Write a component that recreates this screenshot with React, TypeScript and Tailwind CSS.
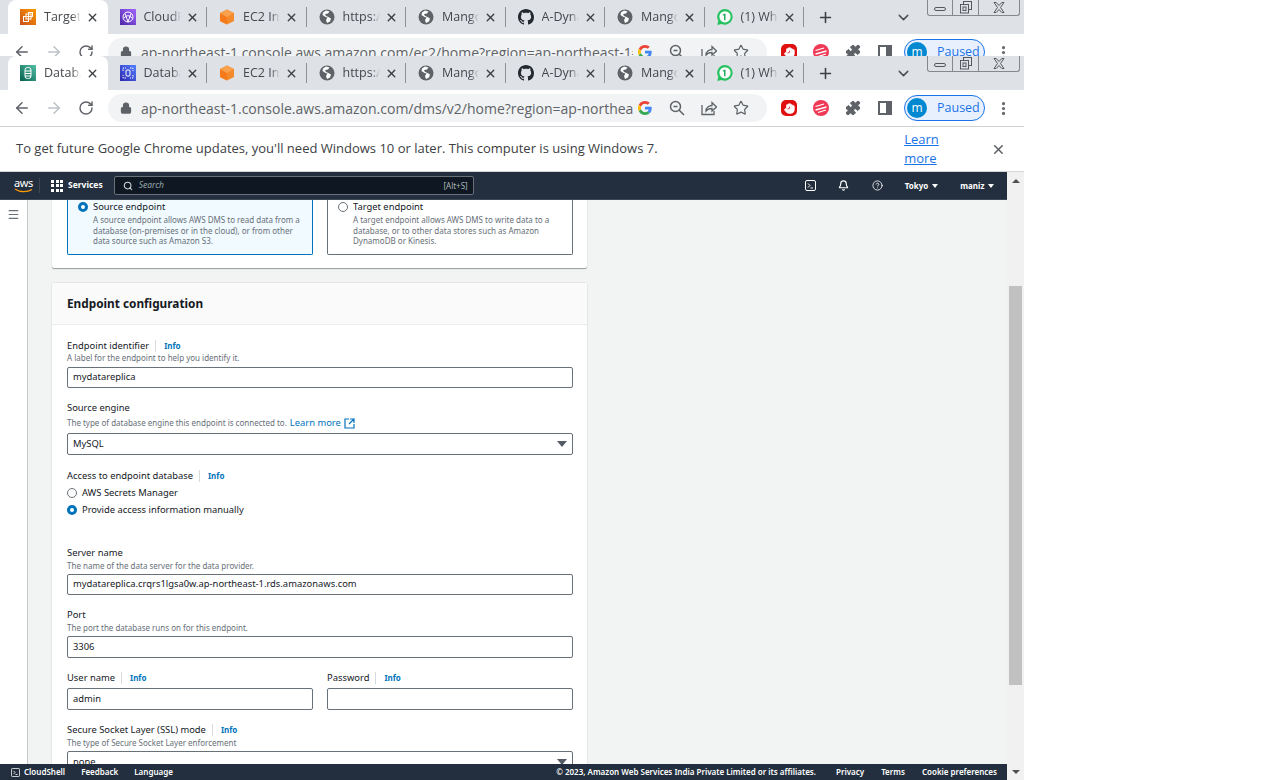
import React from "react";
import { ArrowLeft, ArrowRight, RotateCw, Lock, X, Plus, ChevronDown, Star, Search, Hand, Puzzle, MoreVertical, Menu, Bell, CircleHelp, Globe } from "lucide-react";

const Square = ({ from, to, children }: { from: string; to: string; children?: React.ReactNode }) => (
  <svg width="16" height="16" viewBox="0 0 16 16" className="shrink-0">
    <defs>
      <linearGradient id={from.slice(1) + "g"} x1="0" y1="1" x2="1" y2="0">
        <stop offset="0" stopColor={from} />
        <stop offset="1" stopColor={to} />
      </linearGradient>
    </defs>
    <rect width="16" height="16" fill={`url(#${from.slice(1)}g)`} />
    {children}
  </svg>
);

const Ec2Icon = () => (
  <Square from="#c8511b" to="#ff9900">
    <g fill="none" stroke="#fff" strokeWidth="1">
      <rect x="3.5" y="7.5" width="5" height="5" />
      <rect x="6" y="5" width="5" height="5" />
      <rect x="8.5" y="3.5" width="4" height="4" />
    </g>
  </Square>
);
const CloudFrontIcon = () => (
  <Square from="#4d27a8" to="#a166ff">
    <g fill="none" stroke="#fff" strokeWidth="1">
      <circle cx="8" cy="8" r="5" />
      <path d="M5 4.5 8 13M11 4.5 8 13M4 9c3-3 5-3 8 0" />
    </g>
  </Square>
);
const RdsIcon = () => (
  <Square from="#055f4e" to="#56c0a7">
    <g fill="none" stroke="#fff" strokeWidth="1">
      <rect x="5" y="2.5" width="6" height="11" rx="2.5" />
      <path d="M5 6h6M5 8.5h6M5 11h6" />
    </g>
  </Square>
);
const DmsIcon = () => (
  <Square from="#2e27ad" to="#527fff">
    <g fill="none" stroke="#fff" strokeWidth="1">
      <rect x="6" y="5" width="4" height="6" rx="1" />
      <path d="M3 6V3h3M10 3h3v3M13 10v3h-3M6 13H3v-3" strokeDasharray="1.5 1" />
    </g>
  </Square>
);
const BoxIcon = () => (
  <svg width="16" height="16" viewBox="0 0 16 16" className="shrink-0">
    <path d="M8 0.5 15 4v8l-7 3.5L1 12V4z" fill="#f58a2b" />
    <path d="M8 8v7.5L1 12V4z" fill="#f47a1c" />
    <path d="M8 0.5 15 4 8 8 1 4z" fill="#f9a04d" />
  </svg>
);
const GlobeFav = () => (
  <svg width="16" height="16" viewBox="0 0 16 16" className="shrink-0">
    <circle cx="8" cy="8" r="7.5" fill="#5f6368" />
    <path d="M7 1.5 4 3.5 3.5 6l3 2 2 .5L7 11l1 3 3-1.5 1-3-2.500-1.500L7 7 6 5l3-.5 1.500-2z" fill="#fff" />
  </svg>
);
const GithubFav = () => (
  <svg width="16" height="16" viewBox="0 0 16 16" className="shrink-0" fill="#24292f">
    <path d="M8 0C3.58 0 0 3.58 0 8c0 3.54 2.29 6.53 5.47 7.59.4.07.55-.17.55-.38 0-.19-.01-.82-.01-1.49-2.010.37-2.530-.49-2.690-.94-.09-.23-.48-.94-.82-1.130-.28-.15-.68-.52-.01-.53.63-.01 1.080.58 1.230.82.72 1.210 1.870.87 2.330.66.07-.52.28-.87.51-1.070-1.780-.2-3.640-.89-3.640-3.950 0-.87.31-1.590.82-2.150-.08-.2-.36-1.020.08-2.120 0 0 .67-.21 2.200.82.64-.18 1.320-.27 2-.27s1.360.09 2 .27c1.530-1.040 2.200-.82 2.200-.82.44 1.100.16 1.920.08 2.120.51.56.82 1.270.82 2.150 0 3.070-1.870 3.750-3.650 3.950.29.25.54.73.54 1.480 0 1.070-.01 1.930-.01 2.200 0 .21.15.46.55.38A8.010 8.010 0 0 0 16 8c0-4.420-3.580-8-8-8z" />
  </svg>
);
const WhatsappFav = () => (
  <svg width="16" height="16" viewBox="0 0 16 16" className="shrink-0">
    <path d="M8 0a7.800 7.800 0 0 0-6.700 11.800L.3 16l4.300-1.100A7.800 7.800 0 1 0 8 0z" fill="#25c25f" />
    <circle cx="8" cy="7.800" r="5.600" fill="#fff" />
    <path d="M8.500 4.500v6.800H7.100V6.200l-1.300.4V5.500l2.500-1z" fill="#12a84d" />
  </svg>
);

const GoogleG = () => (
  <svg width="14" height="14" viewBox="0 0 48 48">
    <path fill="#EA4335" d="M24 9.500c3.500 0 6.700 1.200 9.200 3.600l6.900-6.900C35.900 2.400 30.500 0 24 0 14.600 0 6.500 5.400 2.600 13.200l8 6.200C12.400 13.700 17.700 9.500 24 9.500z" />
    <path fill="#4285F4" d="M46.900 24.500c0-1.600-.1-3.100-.4-4.500H24v9h12.900c-.6 3-2.200 5.500-4.800 7.200l7.700 6c4.500-4.200 7.100-10.300 7.100-17.700z" />
    <path fill="#FBBC05" d="M10.500 28.600c-.5-1.400-.8-3-.8-4.600s.3-3.200.8-4.600l-8-6.200C.9 16.500 0 20.100 0 24s.9 7.500 2.600 10.800l7.900-6.200z" />
    <path fill="#34A853" d="M24 48c6.500 0 11.900-2.100 15.900-5.800l-7.700-6c-2.200 1.500-4.900 2.300-8.100 2.300-6.300 0-11.600-4.200-13.500-9.900l-8 6.200C6.500 42.600 14.600 48 24 48z" />
  </svg>
);

type TabInfo = { icon: React.ReactNode; label: string };

const Tab = ({ tab, active, last }: { tab: TabInfo; active?: boolean; last?: boolean }) => (
  <div
    className={`relative flex h-[34px] w-[99.500px] shrink-0 items-center pl-[12px] pr-[8px] ${
      active ? "rounded-t-[8px] bg-white" : ""
    }`}
  >
    {tab.icon}
    <span className="ml-[8px] w-[37px] overflow-hidden whitespace-nowrap text-[12.500px] text-[#45494e] [mask-image:linear-gradient(to_right,black_75%,transparent)]">
      {tab.label}
    </span>
    <X size={13} strokeWidth={2.5} className="ml-[5px] shrink-0 text-[#3c4043]" />
    {!active && <span className={`absolute right-0 top-[7px] h-[20px] w-px bg-[#8e9195] ${last ? "" : ""}`} />}
  </div>
);

const WindowControls = () => (
  <div className="absolute right-[4px] top-0 flex h-[16px] w-[93px] rounded-b-[3px] border border-t-0 border-[#84888d]">
    <div className="flex w-[25px] items-center justify-center border-r border-[#84888d]">
      <span className="mt-[3px] h-[4px] w-[12px] rounded-[2px] border border-[#55595e]" />
    </div>
    <div className="flex w-[26px] items-center justify-center border-r border-[#84888d]">
      <svg width="12" height="13" viewBox="0 0 12 13" fill="none" stroke="#55595e">
        <rect x="3.500" y="0.500" width="8" height="8" />
        <rect x="0.500" y="3.500" width="8" height="8.500" fill="#dee1e6" />
        <rect x="3" y="6" width="3" height="3.500" />
      </svg>
    </div>
    <div className="flex flex-1 items-center justify-center">
      <svg width="12" height="11" viewBox="0 0 12 11" fill="none" stroke="#55595e">
        <path d="M1 .5h2.200L6 3.500 8.800.5H11L7.500 5.500 11 10.500H8.800L6 7.500 3.200 10.500H1L4.500 5.500z" />
      </svg>
    </div>
  </div>
);

const TabStrip = ({ tabs }: { tabs: TabInfo[] }) => (
  <div className="relative flex h-[34px] items-center bg-[#dee1e6] pl-[8px]">
    {tabs.map((t, i) => (
      <Tab key={i} tab={t} active={i === 0} last={i === tabs.length - 1} />
    ))}
    <Plus size={17} strokeWidth={2.2} className="ml-[13px] shrink-0 text-[#3c4043]" />
    <ChevronDown size={17} strokeWidth={2} className="ml-[61px] shrink-0 text-[#4a4d51]" />
    <WindowControls />
  </div>
);

const Toolbar = ({ url }: { url: string }) => (
  <div className="flex h-[36px] shrink-0 items-center bg-white">
    <ArrowLeft size={18} strokeWidth={2} className="ml-[13px] text-[#5f6368]" />
    <ArrowRight size={18} strokeWidth={2} className="ml-[14px] text-[#bdc1c6]" />
    <RotateCw size={16} strokeWidth={2.2} className="ml-[15px] text-[#5f6368]" />
    <div className="ml-[14px] flex h-[28px] w-[659px] items-center rounded-full bg-[#f1f3f4]">
      <Lock size={12} strokeWidth={2.5} fill="#5f6368" className="ml-[12px] shrink-0 text-[#5f6368]" />
      <span className="ml-[9px] w-[492px] overflow-hidden whitespace-nowrap font-['Open_Sans',sans-serif] text-[14px] text-[#5f6368]">{url}</span>
      <span className="ml-[5px] flex w-[14px] shrink-0"><GoogleG /></span>
      <svg width="16" height="16" viewBox="0 0 16 16" fill="none" stroke="#5f6368" strokeWidth="1.500" className="ml-[17px] shrink-0">
        <circle cx="6.500" cy="6.500" r="5" /><path d="M4.500 6.500h4M10 10l5 5" />
      </svg>
      <svg width="16" height="16" viewBox="0 0 16 16" fill="none" stroke="#5f6368" strokeWidth="1.300" className="ml-[16px] shrink-0">
        <path d="M1 5v9.500h12V11M5 11c0-3.500 3-5.500 6-5.500V2.500L15.500 7 11 11V8.500C8.500 8.500 6.500 9 5 11z" />
      </svg>
      <Star size={16} strokeWidth={1.800} className="ml-[16px] shrink-0 text-[#5f6368]" />
    </div>
    <div className="ml-[14px] flex h-[16px] w-[16px] items-center justify-center rounded-[5px] bg-[#e01010]">
      <Hand size={11} strokeWidth={2.500} fill="#fff" className="text-white" />
    </div>
    <svg width="16" height="16" viewBox="0 0 16 16" className="ml-[16px] shrink-0">
      <circle cx="8" cy="8" r="8" fill="#ee3a56" />
      <path d="M2.500 6.500 11 4M2.500 10 13.500 7M5 12.500l8-2.500" stroke="#fff" strokeWidth="1.300" fill="none" />
    </svg>
    <Puzzle size={16} fill="#5f6368" strokeWidth={1.500} className="ml-[16px] shrink-0 text-[#5f6368]" />
    <svg width="16" height="16" viewBox="0 0 16 16" className="ml-[16px] shrink-0" fill="none">
      <rect x="2" y="2" width="12" height="12" stroke="#5f6368" strokeWidth="2" />
      <rect x="9" y="2" width="5" height="12" fill="#5f6368" />
    </svg>
    <div className="ml-[11px] flex h-[26px] w-[81px] shrink-0 items-center rounded-full border border-[#1a73e8] bg-[#e8f0fe]">
      <span className="ml-[2px] flex h-[20px] w-[20px] items-center justify-center rounded-full bg-[#0288d1] font-['Open_Sans',sans-serif] text-[12px] leading-none text-white">m</span>
      <span className="ml-[10px] font-['Open_Sans',sans-serif] text-[12.500px] text-[#1a73e8]">Paused</span>
    </div>
    <MoreVertical size={17} strokeWidth={2.500} className="ml-[10px] shrink-0 text-[#5f6368]" />
  </div>
);

const common: TabInfo[] = [
  { icon: <BoxIcon />, label: "EC2 Ins" },
  { icon: <GlobeFav />, label: "https://" },
  { icon: <GlobeFav />, label: "Mango" },
  { icon: <GithubFav />, label: "A-Dyna" },
  { icon: <GlobeFav />, label: "Mango" },
  { icon: <WhatsappFav />, label: "(1) Wh" },
];
const tabs1: TabInfo[] = [{ icon: <Ec2Icon />, label: "Target" }, { icon: <CloudFrontIcon />, label: "CloudF" }, ...common];
const tabs2: TabInfo[] = [{ icon: <RdsIcon />, label: "Databa" }, { icon: <DmsIcon />, label: "Databa" }, ...common];

const Info = () => (
  <>
    <span className="mx-[6px] h-[12px] w-px bg-[#d5dbdb]" />
    <span className="ml-[2px] text-[8px] font-bold text-[#0073bb]">Info</span>
  </>
);

const Label = ({ text, info, mt }: { text: string; info?: boolean; mt: string }) => (
  <div className={`flex h-[14px] items-center text-[9.400px] text-[#16191f] ${mt}`}>
    <span>{text}</span>
    {info && <Info />}
  </div>
);

const Desc = ({ children, mt }: { children: React.ReactNode; mt: string }) => (
  <div className={`flex h-[10px] items-center whitespace-nowrap text-[8px] text-[#687078] ${mt}`}>{children}</div>
);

const Input = ({ value, mt, h = "h-[22px]", select }: { value?: string; mt: string; h?: string; select?: boolean }) => (
  <div className={`flex items-center justify-between rounded-[2px] border border-[#687078] bg-white pl-[5px] pr-[5px] text-[9.400px] text-[#16191f] ${mt} ${h}`}>
    <span>{value}</span>
    {select && <span className="h-0 w-0 border-x-[5px] border-t-[6px] border-x-transparent border-t-[#545b64]" />}
  </div>
);

const Radio = ({ on }: { on?: boolean }) =>
  on ? (
    <span className="h-[10px] w-[10px] shrink-0 rounded-full border-[3px] border-[#0073bb] bg-white" />
  ) : (
    <span className="h-[10px] w-[10px] shrink-0 rounded-full border border-[#687078] bg-white" />
  );

const RadioRow = ({ text, on, mt }: { text: string; on?: boolean; mt: string }) => (
  <div className={`flex h-[14px] items-center gap-[5px] text-[9.400px] text-[#16191f] ${mt}`}>
    <Radio on={on} />
    <span>{text}</span>
  </div>
);

const Tile = ({ on, title, lines }: { on?: boolean; title: string; lines: string[] }) => (
  <div
    className={`h-[55px] w-[246px] rounded-b-[2px] border border-t-0 pl-[10px] pt-[1px] ${
      on ? "border-[#0073bb] bg-[#f1faff]" : "border-[#687078] bg-white"
    }`}
  >
    <div className="flex h-[12px] items-center gap-[5px] text-[9.400px] text-[#16191f]">
      <Radio on={on} />
      <span>{title}</span>
    </div>
    <div className="ml-[15px] mt-[2px] text-[8px] leading-[10.500px] text-[#687078]">
      {lines.map((l) => (
        <div key={l} className="whitespace-nowrap">{l}</div>
      ))}
    </div>
  </div>
);

const NavSep = () => <span className="h-[15px] w-px bg-[#414750]" />;

const Caret = () => <span className="ml-[4px] h-0 w-0 border-x-[3px] border-t-[4px] border-x-transparent border-t-white" />;

export default function App() {
  return (
    <div className="h-[780px] w-[1268px] overflow-hidden bg-white font-['Open_Sans',sans-serif]">
      <div className="flex h-[780px] w-[1024px] flex-col">
        <div className="h-[56px] shrink-0 overflow-hidden">
          <TabStrip tabs={tabs1} />
          <Toolbar url="ap-northeast-1.console.aws.amazon.com/ec2/home?region=ap-northeast-1#..." />
        </div>
        <TabStrip tabs={tabs2} />
        <Toolbar url="ap-northeast-1.console.aws.amazon.com/dms/v2/home?region=ap-northeast..." />
        <div className="h-px shrink-0 bg-[#d0d2d5]" />
        <div className="flex h-[44px] shrink-0 items-center bg-white pl-[16px] pr-[18px] text-[13px] text-[#3c4043]">
          <span className="w-[895px]">To get future Google Chrome updates, you'll need Windows 10 or later. This computer is using Windows 7.</span>
          <span className="text-[#1a73e8] underline">Learn more</span>
          <X size={15} strokeWidth={2.500} className="ml-[17px] text-[#5f6368]" />
        </div>
        <div className="h-px shrink-0 bg-[#d5d7da]" />
        <div className="flex min-h-0 flex-1">
          <div className="flex min-w-0 flex-1 flex-col font-['Noto_Sans',sans-serif]">
            <nav className="flex h-[28px] shrink-0 items-center border-b border-[#3e4854] bg-[#232f3e] text-white">
              <div className="ml-[13px] flex w-[21px] flex-col items-center leading-none">
                <span className="text-[11px] leading-[10px] tracking-[-0.3px]">aws</span>
                <svg width="20" height="5" viewBox="0 0 20 5" fill="none">
                  <path d="M1 1c5 3.500 12 3.500 17 .5" stroke="#f90" strokeWidth="1.200" />
                </svg>
              </div>
              <span className="ml-[5px] h-[15px] w-px bg-[#414750]" />
              <div className="ml-[11px] grid grid-cols-3 gap-[1.500px]">
                {Array.from({ length: 9 }).map((_, i) => (
                  <span key={i} className="h-[3px] w-[3px] bg-white" />
                ))}
              </div>
              <span className="ml-[5px] text-[8.500px] font-bold">Services</span>
              <div className="ml-[11px] flex h-[19px] w-[360px] items-center rounded-[2px] border border-[#687078] bg-[#0f1822] pl-[8px] pr-[5px]">
                <Search size={10} strokeWidth={2.500} className="text-[#d5dbdb]" />
                <span className="ml-[6px] flex-1 text-[8.500px] italic text-[#95a5a6]">Search</span>
                <span className="text-[8px] text-[#aab7b8]">[Alt+S]</span>
              </div>
              <svg width="11" height="11" viewBox="0 0 11 11" fill="none" stroke="#fff" className="ml-[331px] shrink-0">
                <rect x=".5" y=".5" width="10" height="10" rx="1.500" />
                <path d="M3 3.500 5 5.500 3 7.500M5.500 8h2.500" />
              </svg>
              <span className="ml-[10px]"><NavSep /></span>
              <Bell size={11} strokeWidth={2.500} className="ml-[12px] text-white" />
              <span className="ml-[12px]"><NavSep /></span>
              <CircleHelp size={11} strokeWidth={1.800} className="ml-[11px] text-white" />
              <span className="ml-[10px]"><NavSep /></span>
              <span className="ml-[12px] text-[8px] font-bold">Tokyo</span>
              <Caret />
              <span className="ml-[10px]"><NavSep /></span>
              <span className="ml-[12px] text-[8px] font-bold">maniz</span>
              <Caret />
            </nav>
            <div className="flex min-h-0 flex-1 overflow-hidden bg-[#f2f3f3]">
              <div className="h-full w-[28px] shrink-0 border-r border-[#c6c9cc] bg-white pt-[8px]">
                <Menu size={13} strokeWidth={2.200} className="ml-[7px] text-[#687078]" />
              </div>
              <div className="ml-[24px] w-[535px] shrink-0">
                <div className="flex gap-[14px] rounded-b-[2px] bg-white pb-[13px] pl-[15px] shadow-[0_1px_1px_0_rgba(0,28,36,0.4)]">
                  <Tile on title="Source endpoint" lines={["A source endpoint allows AWS DMS to read data from a", "database (on-premises or in the cloud), or from other", "data source such as Amazon S3."]} />
                  <Tile title="Target endpoint" lines={["A target endpoint allows AWS DMS to write data to a", "database, or to other data stores such as Amazon", "DynamoDB or Kinesis."]} />
                </div>
                <section className="mt-[15px] rounded-t-[2px] bg-white shadow-[0_0_1px_0_rgba(0,28,36,0.5)]">
                  <h2 className="flex h-[42px] items-center border-b border-[#eaeded] bg-[#fafafa] pl-[15px] text-[11.800px] font-bold text-[#16191f]">Endpoint configuration</h2>
                  <div className="pl-[15px] pr-[14px] pt-[14px]">
                    <Label text="Endpoint identifier" info mt="" />
                    <Desc mt="">A label for the endpoint to help you identify it.</Desc>
                    <Input value="mydatareplica" mt="mt-[4px]" h="h-[21px]" />
                    <Label text="Source engine" mt="mt-[13px]" />
                    <Desc mt="mt-[3px]">
                      <span>The type of database engine this endpoint is connected to.</span>
                      <span className="ml-[3px] text-[9.400px] text-[#0073bb]">Learn more</span>
                      <svg width="11" height="11" viewBox="0 0 11 11" fill="none" stroke="#0073bb" strokeWidth="1.200" className="ml-[3px]">
                        <path d="M5 1H1v9h9V6M6 1h4v4M10 1 5 6" />
                      </svg>
                    </Desc>
                    <Input value="MySQL" mt="mt-[5px]" select />
                    <Label text="Access to endpoint database" info mt="mt-[14px]" />
                    <RadioRow text="AWS Secrets Manager" mt="mt-[3px]" />
                    <RadioRow text="Provide access information manually" on mt="mt-[3px]" />
                    <Label text="Server name" mt="mt-[29px]" />
                    <Desc mt="mt-[1px]">The name of the data server for the data provider.</Desc>
                    <Input value="mydatareplica.crqrs1lgsa0w.ap-northeast-1.rds.amazonaws.com" mt="mt-[3px]" h="h-[21px]" />
                    <Label text="Port" mt="mt-[13px]" />
                    <Desc mt="mt-[1px]">The port the database runs on for this endpoint.</Desc>
                    <Input value="3306" mt="mt-[3px]" />
                    <div className="mt-[13px] grid grid-cols-2 gap-[14px]">
                      <div>
                        <Label text="User name" info mt="" />
                        <Input value="admin" mt="mt-[3px]" />
                      </div>
                      <div>
                        <Label text="Password" info mt="" />
                        <Input mt="mt-[3px]" />
                      </div>
                    </div>
                    <Label text="Secure Socket Layer (SSL) mode" info mt="mt-[13px]" />
                    <Desc mt="mt-[1px]">The type of Secure Socket Layer enforcement</Desc>
                    <Input value="none" mt="mt-[3px]" select />
                  </div>
                </section>
              </div>
            </div>
            <footer className="flex h-[16px] shrink-0 items-center bg-[#232f3e] text-[8px] font-semibold text-white">
              <svg width="9" height="9" viewBox="0 0 11 11" fill="none" stroke="#fff" className="ml-[11px] shrink-0">
                <rect x=".5" y=".5" width="10" height="10" rx="1.500" />
                <path d="M3 3.500 5 5.500 3 7.500M5.500 8h2.500" />
              </svg>
              <span className="ml-[4px]">CloudShell</span>
              <span className="ml-[16px]">Feedback</span>
              <span className="ml-[16px]">Language</span>
              <span className="ml-auto">© 2023, Amazon Web Services India Private Limited or its affiliates.</span>
              <span className="ml-[20px]">Privacy</span>
              <span className="ml-[17px]">Terms</span>
              <span className="ml-[17px] mr-[10px]">Cookie preferences</span>
            </footer>
          </div>
          <div className="flex w-[17px] shrink-0 flex-col bg-[#f1f1f1]">
            <div className="flex h-[17px] shrink-0 items-center justify-center">
              <span className="h-0 w-0 border-x-[4px] border-b-[4px] border-x-transparent border-b-[#505050]" />
            </div>
            <div className="mx-[2px] mt-[97px] h-[399px] bg-[#c1c1c1]" />
            <div className="mt-auto flex h-[17px] shrink-0 items-center justify-center">
              <span className="h-0 w-0 border-x-[4px] border-t-[4px] border-x-transparent border-t-[#505050]" />
            </div>
          </div>
        </div>
      </div>
    </div>
  );
}
